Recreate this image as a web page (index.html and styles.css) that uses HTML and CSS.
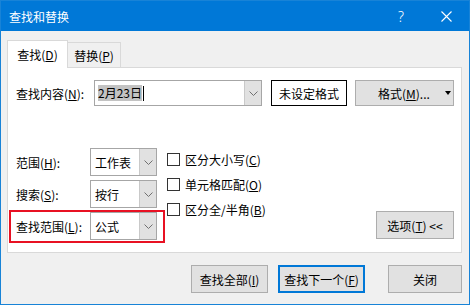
FILE: index.html
```html
<!DOCTYPE html>
<html lang="zh-CN">
<head>
    <meta charset="UTF-8">
    <meta name="viewport" content="width=device-width, initial-scale=1.0">
    <title>查找和替换</title>
    <link rel="stylesheet" href="styles.css">
</head>
<body>

    <div class="dialog">

        <!-- Title Bar -->
        <div class="titlebar">
            <span class="title">查找和替换</span>
            <span class="help">?</span>
            <span class="close">
                <svg width="11" height="11" viewBox="0 0 11 11">
                    <path d="M0.5 0.5 L10.5 10.5 M10.5 0.5 L0.5 10.5" stroke="#fff" stroke-width="1.1" fill="none"/>
                </svg>
            </span>
        </div>

        <!-- Tabs -->
        <div class="tabs">
            <div class="tab active">查找(<u>D</u>)</div>
            <div class="tab">替换(<u>P</u>)</div>
        </div>

        <!-- Tab Panel -->
        <div class="panel">
            <div class="find-row">
                <span class="find-label">查找内容(<u>N</u>):</span>
                <div class="combo find-combo">
                    <div class="combo-text"><span class="selected">2月23日</span><span class="caret"></span></div>
                    <div class="combo-arrow">
                        <svg width="9" height="5" viewBox="0 0 9 5"><path d="M0.5 0.5 L4.5 4.5 L8.5 0.5" stroke="#707070" fill="none"/></svg>
                    </div>
                </div>
                <div class="format-preview">未设定格式</div>
                <button class="btn format-btn">格式(<u>M</u>)... <span class="tri"></span></button>
            </div>

            <div class="options">
                <div class="fields">
                    <div class="field">
                        <span class="field-label">范围(<u>H</u>):</span>
                        <div class="combo select">
                            <div class="combo-text">工作表</div>
                            <div class="combo-arrow">
                                <svg width="9" height="5" viewBox="0 0 9 5"><path d="M0.5 0.5 L4.5 4.5 L8.5 0.5" stroke="#707070" fill="none"/></svg>
                            </div>
                        </div>
                    </div>
                    <div class="field">
                        <span class="field-label">搜索(<u>S</u>):</span>
                        <div class="combo select">
                            <div class="combo-text">按行</div>
                            <div class="combo-arrow">
                                <svg width="9" height="5" viewBox="0 0 9 5"><path d="M0.5 0.5 L4.5 4.5 L8.5 0.5" stroke="#707070" fill="none"/></svg>
                            </div>
                        </div>
                    </div>
                    <div class="field highlight">
                        <span class="field-label">查找范围(<u>L</u>):</span>
                        <div class="combo select">
                            <div class="combo-text">公式</div>
                            <div class="combo-arrow">
                                <svg width="9" height="5" viewBox="0 0 9 5"><path d="M0.5 0.5 L4.5 4.5 L8.5 0.5" stroke="#707070" fill="none"/></svg>
                            </div>
                        </div>
                    </div>
                </div>

                <div class="checks">
                    <label class="check"><span class="box"></span>区分大小写(<u>C</u>)</label>
                    <label class="check"><span class="box"></span>单元格匹配(<u>O</u>)</label>
                    <label class="check"><span class="box"></span>区分全/半角(<u>B</u>)</label>
                </div>

                <button class="btn options-btn">选项(<u>T</u>) &lt;&lt;</button>
            </div>
        </div>

        <!-- Bottom Buttons -->
        <div class="footer">
            <button class="btn find-all">查找全部(<u>I</u>)</button>
            <button class="btn find-next">查找下一个(<u>F</u>)</button>
            <button class="btn close-btn">关闭</button>
        </div>
    </div>

</body>
</html>
```

FILE: styles.css
```css
/* General Body Styling */
body {
    margin: 0;
    font-family: "Noto Sans CJK SC", "Noto Sans", sans-serif;
    font-size: 12px;
    color: #000;
}

u {
    text-decoration: underline;
    text-underline-offset: 1px;
}

/* Dialog Window */
.dialog {
    width: 470px;
    height: 305px;
    box-sizing: border-box;
    border: 1px solid #1883d7;
    background-color: #f0f0f0;
}

/* Title Bar */
.titlebar {
    height: 30px;
    background-color: #0078d7;
    color: white;
    display: flex;
    align-items: center;
    padding-left: 8px;
}

.title {
    font-size: 12px;
}

.help {
    margin-left: auto;
    margin-right: 37px;
    font-family: "Noto Sans", sans-serif;
    font-size: 14px;
    font-weight: 300;
}

.close {
    display: flex;
    margin-right: 17px;
}

/* Tabs */
.tabs {
    display: flex;
    align-items: flex-end;
    height: 27px;
    margin-top: 9px;
    padding-left: 6px;
}

.tab {
    height: 25px;
    box-sizing: border-box;
    border: 1px solid #d9d9d9;
    border-bottom: none;
    border-left: none;
    background-color: #f0f0f0;
    width: 53px;
    display: flex;
    align-items: center;
    justify-content: center;
    padding-top: 1px;
}

.tab.active {
    height: 28px;
    width: 61px;
    margin-bottom: -1px;
    border-left: 1px solid #d9d9d9;
    background-color: white;
    position: relative;
    z-index: 1;
    padding-top: 0;
}

/* Tab Panel */
.panel {
    margin-left: 6px;
    width: 455px;
    height: 186px;
    box-sizing: border-box;
    border: 1px solid #d9d9d9;
    background-color: white;
    padding: 12px 7px 12px 8px;
}

.find-row {
    display: flex;
    align-items: center;
    height: 26px;
}

.find-label {
    width: 78px;
}

/* Combo Boxes */
.combo {
    display: flex;
    box-sizing: border-box;
    border: 1px solid #a6a6a6;
    background-color: white;
    height: 100%;
}

.combo-text {
    flex: 1;
    display: flex;
    align-items: center;
    padding-left: 3px;
}

.combo-arrow {
    width: 16px;
    background-color: #e1e1e1;
    border-left: 1px solid #c9c9c9;
    display: flex;
    align-items: center;
    justify-content: center;
}

.find-combo {
    width: 168px;
}

.selected {
    background-color: #c3c3c3;
    line-height: 16px;
}

.caret {
    width: 1px;
    height: 15px;
    margin-left: 1px;
    background-color: #000;
}

.format-preview {
    margin-left: 9px;
    width: 76px;
    height: 26px;
    box-sizing: border-box;
    border: 1px solid #000;
    display: flex;
    align-items: center;
    justify-content: center;
}

/* Buttons */
.btn {
    font-family: inherit;
    font-size: 12px;
    color: #000;
    background-color: #e1e1e1;
    border: 1px solid #adadad;
    box-sizing: border-box;
    height: 28px;
    padding: 0;
    margin: 0;
}

.format-btn {
    margin-left: 8px;
    width: 99px;
    height: 26px;
    display: flex;
    align-items: center;
    padding: 0 2px 0 22px;
}

.tri {
    margin-left: auto;
    width: 0;
    height: 0;
    border-left: 3.5px solid transparent;
    border-right: 3.5px solid transparent;
    border-top: 4px solid #000;
}

/* Search Options */
.options {
    display: flex;
    margin-top: 42px;
}

.fields {
    display: flex;
    flex-direction: column;
    gap: 4px;
}

.field {
    display: flex;
    align-items: center;
    height: 28px;
}

.field-label {
    width: 74px;
}

.select {
    width: 67px;
}

.select .combo-text {
    padding-left: 4px;
}

.field.highlight {
    position: relative;
}

.field.highlight::after {
    content: "";
    position: absolute;
    left: -7px;
    right: -8px;
    top: -2px;
    bottom: -3px;
    border: 2px solid #e81123;
}

.checks {
    display: flex;
    flex-direction: column;
    gap: 12px;
    margin-left: 10px;
    padding-top: 5px;
}

.check {
    display: flex;
    align-items: center;
    height: 13px;
}

.box {
    width: 13px;
    height: 13px;
    box-sizing: border-box;
    border: 1px solid #333;
    margin-right: 5px;
}

.options-btn {
    margin-left: auto;
    align-self: flex-end;
    width: 78px;
    margin-bottom: 1px;
}

/* Footer */
.footer {
    display: flex;
    justify-content: flex-end;
    margin-top: 12px;
    padding-right: 7px;
}

.find-all {
    width: 77px;
}

.find-next {
    width: 87px;
    margin-left: 10px;
    border: 2px solid #0078d7;
}

.close-btn {
    width: 74px;
    margin-left: 23px;
}
```
